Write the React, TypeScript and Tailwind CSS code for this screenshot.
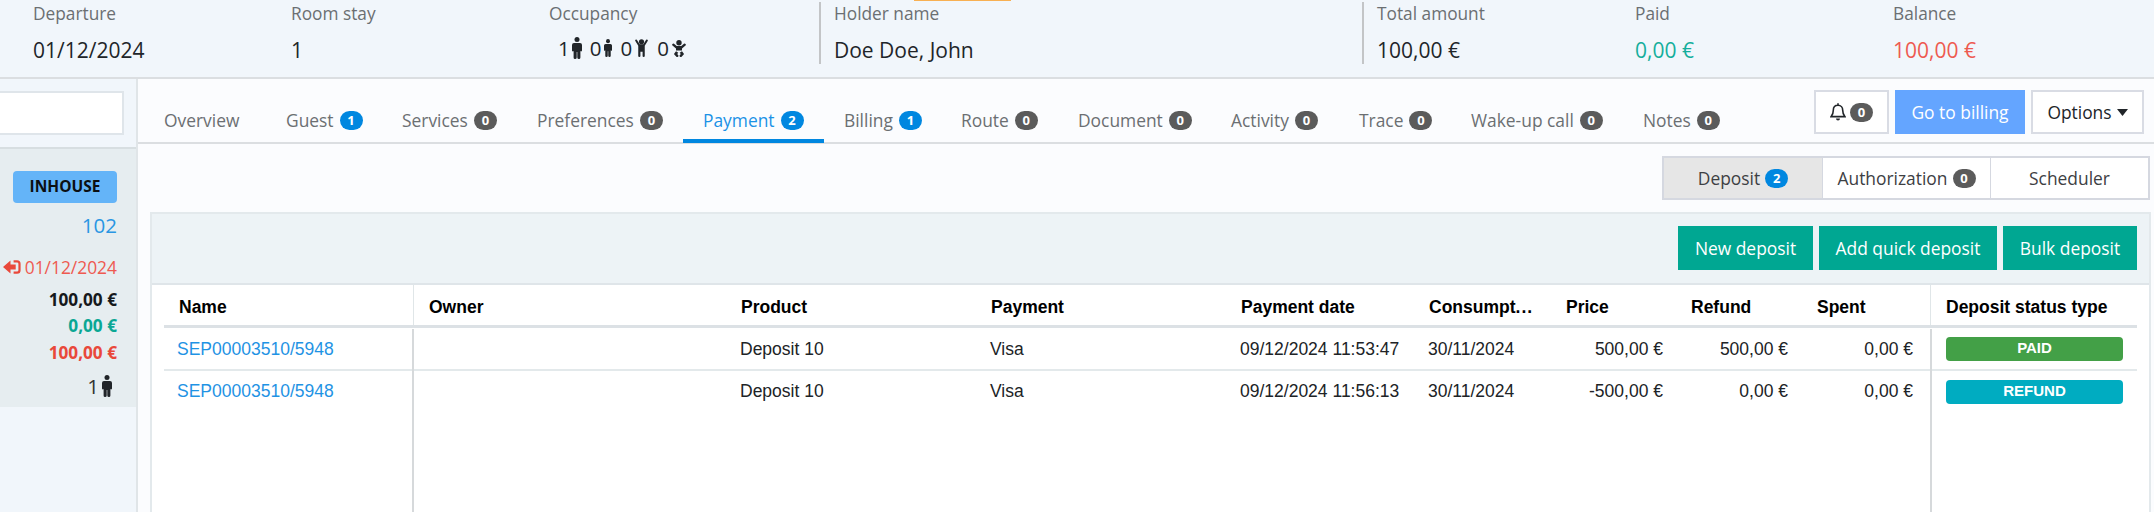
import React from "react";

const LABEL = "text-[17.3px] leading-[24px] text-[#6b6f72] whitespace-nowrap";
const VALUE = "mt-[10px] text-[21px] leading-[28px] whitespace-nowrap";

function Person({ className }: { className: string }) {
  return (
    <svg viewBox="0 0 10 22" className={className} fill="currentColor" preserveAspectRatio="none">
      <circle cx="5" cy="2.6" r="2.5" />
      <path d="M2 6h6q2 0 2 2v5.600q0 .8-.8.8-.7 0-.8-.6V20.500q0 1.500-1.500 1.500T5.300 20.500V15H4.700v5.500Q4.700 22 3.100 22T1.600 20.500V13.800q-.1.6-.8.600Q0 14.400 0 13.600V8Q0 6 2 6z" />
    </svg>
  );
}

function Child({ className }: { className: string }) {
  return (
    <svg viewBox="0 0 12 17" className={className} fill="currentColor" preserveAspectRatio="none">
      <circle cx="6" cy="2.600" r="2.400" />
      <path d="M1.700.8 4.300 4.900h3.400L10.300.8q.6-.6 1.200-.1t.2 1.200L9 6.400V16q0 1-1 1t-1-1v-4H5v4q0 1-1 1t-1-1V6.400L.3 1.900Q-.1 1.200.5.700t1.200.1z" />
    </svg>
  );
}

function Baby({ className }: { className: string }) {
  return (
    <svg viewBox="0 0 14 17" className={className} fill="currentColor">
      <circle cx="7" cy="2.700" r="2.700" />
      <path d="M2 3.800 4.700 6h4.600L12 3.800q.8-.5 1.500.2t0 1.500L10 8.500v2H4v-2L.5 5.500Q-.2 4.700.5 4T2 3.800z" />
      <path d="M4 11.300 6.300 12.800 5.200 14l1.100 1.300q.4 1-.4 1.500t-1.500-.1L2.300 14.600q-.4-.6 0-1.200zM10 11.300 7.700 12.800 8.800 14l-1.100 1.300q-.4 1 .4 1.500t1.500-.1l2.100-2.100q.4-.6 0-1.200z" />
    </svg>
  );
}

function Badge({ n }: { n: number }) {
  return (
    <span
      className={`inline-flex h-[19px] w-[23px] shrink-0 items-center justify-center rounded-full text-[13px] font-bold leading-none text-white ${
        n ? "bg-[#0087e0]" : "bg-[#5b5b5b]"
      }`}
    >
      {n}
    </span>
  );
}

const tabs: { label: string; n?: number; w: string; active?: boolean }[] = [
  { label: "Overview", w: "w-[122px]" },
  { label: "Guest", n: 1, w: "w-[116px]" },
  { label: "Services", n: 0, w: "w-[135px]" },
  { label: "Preferences", n: 0, w: "w-[166px]" },
  { label: "Payment", n: 2, w: "w-[141px]", active: true },
  { label: "Billing", n: 1, w: "w-[117px]" },
  { label: "Route", n: 0, w: "w-[117px]" },
  { label: "Document", n: 0, w: "w-[153px]" },
  { label: "Activity", n: 0, w: "w-[128px]" },
  { label: "Trace", n: 0, w: "w-[112px]" },
  { label: "Wake-up call", n: 0, w: "w-[172px]" },
  { label: "Notes", n: 0, w: "w-[117px]" },
];

function Header() {
  return (
    <header className="flex h-[79px] shrink-0 border-b-2 border-[#dbdee1] bg-[#f1f6fb] pl-[33px] pt-[2px] text-[#212529]">
      <div className="w-[258px]">
        <div className={LABEL}>Departure</div>
        <div className={VALUE}>01/12/2024</div>
      </div>
      <div className="w-[258px]">
        <div className={LABEL}>Room stay</div>
        <div className={VALUE}>1</div>
      </div>
      <div className="w-[270px]">
        <div className={LABEL}>Occupancy</div>
        <div className="mt-[8px] flex h-[28px] items-center pl-[9px] text-[20.5px] leading-[28px]">
          <span>1</span>
          <Person className="ml-[2px] h-[22px] w-[10px]" />
          <span className="ml-[8px]">0</span>
          <Person className="ml-[3px] h-[18px] w-[8px]" />
          <span className="ml-[8px]">0</span>
          <Child className="ml-[3px] h-[18px] w-[13px]" />
          <span className="ml-[9px]">0</span>
          <Baby className="ml-[3px] h-[17px] w-[14px]" />
        </div>
      </div>
      <div className="h-[62px] w-[543px] border-l-2 border-[#c3c5c7] pl-[13px]">
        <div className={LABEL}>Holder name</div>
        <div className={VALUE}>Doe Doe, John</div>
      </div>
      <div className="h-[62px] w-[273px] border-l-2 border-[#c3c5c7] pl-[13px]">
        <div className={LABEL}>Total amount</div>
        <div className={VALUE}>100,00 €</div>
      </div>
      <div className="w-[258px]">
        <div className={LABEL}>Paid</div>
        <div className={`${VALUE} text-[#15ae9c]`}>0,00 €</div>
      </div>
      <div>
        <div className={LABEL}>Balance</div>
        <div className={`${VALUE} text-[#ee5a50]`}>100,00 €</div>
      </div>
    </header>
  );
}

function Sidebar() {
  return (
    <aside className="flex w-[138px] shrink-0 flex-col border-r-2 border-[#e0e5e8] bg-[#f1f6fb]">
      <div className="h-[68px] pt-[12px]">
        <div className="h-[44px] w-[124px] border-2 border-l-0 border-[#dfe5ea] bg-white" />
      </div>
      <div className="flex h-[260px] flex-col items-end border-t-2 border-[#d7dee1] bg-[#e6edf0] pr-[19px] pt-[22px]">
        <div className="flex h-[32px] w-[104px] items-center justify-center rounded-[4px] bg-[#64b4f8] text-[15.5px] font-bold text-[#0b0f12]">
          INHOUSE
        </div>
        <div className="mt-[8px] text-[20.5px] leading-[28px] text-[#2a96e3]">102</div>
        <div className="mt-[16px] flex items-center gap-[4px] text-[17.4px] leading-[24px] text-[#ee5a50]">
          <svg viewBox="0 0 18 14" className="h-[14px] w-[18px] text-[#e9483a]" fill="currentColor">
            <path d="M0 7 7.500.4v4h5.200v5.200H7.500v4z" />
            <path d="M10.600 1.300H14q2.500 0 2.500 2.500v6.400q0 2.500-2.500 2.500h-3.400" fill="none" stroke="currentColor" strokeWidth="2.200" />
          </svg>
          <span>01/12/2024</span>
        </div>
        <div className="mt-[8px] text-right text-[17.2px] font-bold leading-[26.300px]">
          <div className="text-[#16191c]">100,00 €</div>
          <div className="text-[#0aa794]">0,00 €</div>
          <div className="text-[#e9483a]">100,00 €</div>
        </div>
        <div className="mt-[7px] flex h-[26px] items-center pr-[5px] text-[20.5px] text-[#333]">
          <span>1</span>
          <Person className="ml-[3px] h-[22px] w-[10px] text-[#212529]" />
        </div>
      </div>
    </aside>
  );
}

const cols = "grid grid-cols-[249px_313px_249px_250px_187px_138px_125px_125px_130px_207px]";

function Row({ date, price, refund, spent, status, color, line }: {
  date: string; price: string; refund: string; spent: string; status: string; color: string; line?: boolean;
}) {
  return (
    <div className={`${cols} items-center text-[17.5px] text-[#202326] ${line ? "h-[43px] border-b-2 border-[#e3e9eb] pt-px" : "h-[41px]"}`}>
      <div className="pl-[13px] text-[#1f93e4]">SEP00003510/5948</div>
      <div />
      <div className="pl-[14px]">Deposit 10</div>
      <div className="pl-[15px]">Visa</div>
      <div className="pl-[15px]">{date}</div>
      <div className="pl-[16px]">30/11/2024</div>
      <div className="pr-[12px] text-right">{price}</div>
      <div className="pr-[12px] text-right">{refund}</div>
      <div className="pr-[17px] text-right">{spent}</div>
      <div className="pl-[16px]">
        <div className={`flex h-[24px] w-[177px] items-center justify-center rounded-[4px] pb-px text-[15px] font-bold text-white ${color}`}>{status}</div>
      </div>
    </div>
  );
}

export default function App() {
  return (
    <div className="relative flex h-[512px] w-[2154px] flex-col overflow-hidden bg-[#fbfcfe] font-['Open_Sans','Noto_Sans',sans-serif]">
      <div className="absolute left-[914px] top-0 h-[1px] w-[97px] bg-[#f8b052]" />
      <Header />
      <div className="flex min-h-0 flex-1">
        <Sidebar />
        <main className="flex min-w-0 flex-1 flex-col">
          <div className="flex h-[65px] shrink-0 border-b-2 border-[#dbdee1] pl-[6px]">
            <nav className="flex">
              {tabs.map((t) => (
                <div
                  key={t.label}
                  className={`-mb-[1px] flex h-[64px] items-center pl-[20px] pt-[22px] text-[17.4px] whitespace-nowrap ${t.w} ${
                    t.active ? "border-b-4 border-[#0087e0] text-[#1b92e6]" : "border-b-4 border-transparent text-[#6b6f72]"
                  }`}
                >
                  <span className="mr-[6px]">{t.label}</span>
                  {t.n !== undefined && <Badge n={t.n} />}
                </div>
              ))}
            </nav>
            <div className="ml-auto flex gap-[6px] pr-[10px] pt-[11px] text-[17.4px] text-[#212529]">
              <div className="flex h-[44px] w-[75px] items-center justify-center gap-[4px] border-2 border-[#d9dce4] bg-white">
                <svg viewBox="0 0 16 18" className="h-[18px] w-[16px]" fill="none" stroke="currentColor" strokeWidth="1.600">
                  <path d="M8 .3v2M8 2.300c-3 0-4.700 2.200-4.700 5 0 3.500-.9 4.800-2.100 6.300h13.600c-1.200-1.500-2.100-2.800-2.100-6.300 0-2.800-1.700-5-4.700-5z" />
                  <path d="M6 15.500a2 2 0 0 0 4 0z" fill="currentColor" stroke="none" />
                </svg>
                <Badge n={0} />
              </div>
              <div className="flex h-[44px] w-[130px] items-center justify-center bg-[#64a5ff] text-white">Go to billing</div>
              <div className="flex h-[44px] w-[113px] items-center justify-center gap-[5px] border-2 border-[#d9dce4] bg-white">
                Options
                <svg viewBox="0 0 11 7" className="h-[7px] w-[11px]" fill="currentColor"><path d="M0 0h11L5.500 7z" /></svg>
              </div>
            </div>
          </div>
          <div className="flex h-[68px] shrink-0 justify-end pr-[4px] pt-[12px] text-[17.4px] text-[#3d4043]">
            <div className="flex h-[44px] w-[488px] border-2 border-[#d5d8e0] bg-white">
              <div className="flex w-[158px] items-center justify-center gap-[5px] bg-[#e6e6e6]">Deposit <Badge n={2} /></div>
              <div className="flex w-[169px] items-center justify-center gap-[5px] border-x border-[#d5d8e0]">Authorization <Badge n={0} /></div>
              <div className="flex flex-1 items-center justify-center">Scheduler</div>
            </div>
          </div>
          <section className="ml-[12px] mr-[3px] flex flex-1 flex-col border-x-2 border-t-2 border-[#e3e9ec] bg-white">
            <div className="flex h-[71px] shrink-0 justify-end gap-[6px] border-b-2 border-[#dfe5e9] bg-[#edf3f6] pr-[12px] pt-[12px] text-[17.4px] text-white">
              <div className="flex h-[44px] w-[135px] items-center justify-center bg-[#00a792]">New deposit</div>
              <div className="flex h-[44px] w-[178px] items-center justify-center bg-[#00a792]">Add quick deposit</div>
              <div className="flex h-[44px] w-[134px] items-center justify-center bg-[#00a792]">Bulk deposit</div>
            </div>
            <div className="relative flex-1 pl-[12px] pr-[12px] font-['Liberation_Sans',Arial,sans-serif]">
              <div className={`${cols} h-[43px] items-center border-b-[3px] border-[#dce1e5] pt-[4px] text-[17.5px] font-bold text-black`}>
                <div className="pl-[15px]">Name</div>
                <div className="pl-[16px]">Owner</div>
                <div className="pl-[15px]">Product</div>
                <div className="pl-[16px]">Payment</div>
                <div className="pl-[16px]">Payment date</div>
                <div className="pl-[17px]">Consumpt<span className="tracking-[1px]">...</span></div>
                <div className="pl-[16px]">Price</div>
                <div className="pl-[16px]">Refund</div>
                <div className="pl-[17px]">Spent</div>
                <div className="pl-[16px]">Deposit status type</div>
              </div>
              <Row date="09/12/2024 11:53:47" price="500,00 €" refund="500,00 €" spent="0,00 €" status="PAID" color="bg-[#43a047]" line />
              <Row date="09/12/2024 11:56:13" price="-500,00 €" refund="0,00 €" spent="0,00 €" status="REFUND" color="bg-[#00acc1]" />
              <div className="absolute left-[261px] top-0 h-[40px] w-px bg-[#e0e6e8]" />
              <div className="absolute bottom-0 left-[260px] top-[44px] w-[2px] bg-[#d6d9db]" />
              <div className="absolute left-[1778px] top-0 h-[40px] w-px bg-[#e0e6e8]" />
              <div className="absolute bottom-0 left-[1778px] top-[44px] w-[2px] bg-[#d6d9db]" />
            </div>
          </section>
        </main>
      </div>
    </div>
  );
}
